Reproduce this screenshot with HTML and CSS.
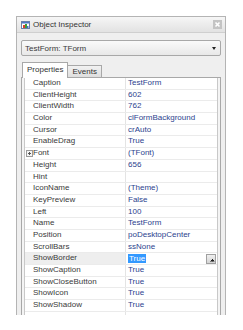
FILE: index.html
```html
<!DOCTYPE html>
<html lang="en">
<head>
<meta charset="UTF-8">
<title>Object Inspector</title>
<link rel="stylesheet" href="styles.css">
</head>
<body>

    <div class="window">
        <div class="titlebar">
            <svg class="title-icon" width="9" height="8" viewBox="0 0 9 8">
                <rect x="0.5" y="0.5" width="8" height="7" fill="#fff" stroke="#6b7fa8"/>
                <rect x="1" y="1" width="7" height="1.5" fill="#4d78c8"/>
                <rect x="2" y="4" width="2" height="3" fill="#d9412e"/>
                <rect x="4" y="3" width="2" height="4" fill="#3f9c3a"/>
                <rect x="6" y="5" width="1.5" height="2" fill="#3b6fd1"/>
            </svg>
            <span class="title-text">Object Inspector</span>
            <span class="close-btn">
                <svg width="9" height="9" viewBox="0 0 9 9">
                    <rect width="9" height="9" fill="#c4c4c4"/>
                    <path d="M2.5 2.5 L6.5 6.5 M6.5 2.5 L2.5 6.5" stroke="#fff" stroke-width="1.6"/>
                </svg>
            </span>
        </div>

        <div class="combo">
            <span>TestForm: TForm</span>
            <span class="arrow"></span>
        </div>

        <div class="tabs">
            <div class="tab active">Properties</div>
            <div class="tab">Events</div>
        </div>

        <div class="sheet">
            <div class="grid">
                <div class="row"><div class="name">Caption</div><div class="value">TestForm</div></div>
                <div class="row"><div class="name">ClientHeight</div><div class="value">602</div></div>
                <div class="row"><div class="name">ClientWidth</div><div class="value">762</div></div>
                <div class="row"><div class="name">Color</div><div class="value">clFormBackground</div></div>
                <div class="row"><div class="name">Cursor</div><div class="value">crAuto</div></div>
                <div class="row"><div class="name">EnableDrag</div><div class="value">True</div></div>
                <div class="row"><div class="name"><span class="expand"></span>Font</div><div class="value">(TFont)</div></div>
                <div class="row"><div class="name">Height</div><div class="value">656</div></div>
                <div class="row"><div class="name">Hint</div><div class="value"></div></div>
                <div class="row"><div class="name">IconName</div><div class="value">(Theme)</div></div>
                <div class="row"><div class="name">KeyPreview</div><div class="value">False</div></div>
                <div class="row"><div class="name">Left</div><div class="value">100</div></div>
                <div class="row"><div class="name">Name</div><div class="value">TestForm</div></div>
                <div class="row"><div class="name">Position</div><div class="value">poDesktopCenter</div></div>
                <div class="row"><div class="name">ScrollBars</div><div class="value">ssNone</div></div>
                <div class="row selected">
                    <div class="name">ShowBorder</div>
                    <div class="value editor"><span class="sel-text">True</span><span class="drop-btn"></span></div>
                </div>
                <div class="row"><div class="name">ShowCaption</div><div class="value">True</div></div>
                <div class="row"><div class="name">ShowCloseButton</div><div class="value">True</div></div>
                <div class="row"><div class="name">ShowIcon</div><div class="value">True</div></div>
                <div class="row"><div class="name">ShowShadow</div><div class="value">True</div></div>
                <div class="row"><div class="name"></div><div class="value"></div></div>
            </div>
        </div>
    </div>

</body>
</html>
```

FILE: styles.css
```css
body {
    margin: 0;
    padding: 16px 0 0 16px;
    background-color: #ffffff;
    font-family: "Liberation Sans", Arial, sans-serif;
    font-size: 8px;
    color: #3a3a3a;
}

.window {
    width: 210px;
    height: 299px;
    box-sizing: border-box;
    border: 1px solid #b4b4b4;
    border-bottom: none;
    background-color: #efefef;
    display: flex;
    flex-direction: column;
    overflow: hidden;
}

.titlebar {
    height: 16px;
    flex-shrink: 0;
    display: flex;
    align-items: center;
    padding: 0 3px 0 4px;
    background: linear-gradient(#f6f6f6, #e2e2e2);
    border-bottom: 1px solid #cfcfcf;
    box-sizing: border-box;
}

.title-icon {
    margin-right: 3px;
}

.title-text {
    flex: 1;
    color: #333;
}

.close-btn {
    display: flex;
}

.combo {
    margin: 7px 4px 0 4px;
    height: 16px;
    flex-shrink: 0;
    box-sizing: border-box;
    border: 1px solid #a8a8a8;
    border-radius: 2px;
    background: linear-gradient(#fafafa, #e8e8e8);
    display: flex;
    align-items: center;
    padding: 0 4px 0 3px;
}

.combo span:first-child {
    flex: 1;
}

.arrow {
    width: 0;
    height: 0;
    border-left: 2.5px solid transparent;
    border-right: 2.5px solid transparent;
    border-top: 3px solid #222;
}

.tabs {
    display: flex;
    align-items: flex-end;
    margin: 6px 0 0 6px;
    height: 15px;
    flex-shrink: 0;
}

.tab {
    height: 12px;
    box-sizing: border-box;
    padding: 1px 4px 0 4px;
    border: 1px solid #a8a8a8;
    border-bottom: none;
    background: linear-gradient(#f2f2f2, #dedede);
    color: #333;
    margin-left: -1px;
}

.tab.active {
    padding-top: 2px;
    background: #ffffff;
    position: relative;
    z-index: 1;
    margin-bottom: -1px;
    height: 16px;
}

.sheet {
    margin: 0 4px;
    flex: 1;
    border: 1px solid #a8a8a8;
    border-bottom: none;
    background-color: #f4f4f4;
    padding: 0 2px 0 2px;
    overflow: hidden;
}

.grid {
    background-color: #ffffff;
    border-left: 1px solid #c8c8c8;
    border-right: 1px solid #c8c8c8;
    height: 100%;
}

.row {
    display: grid;
    grid-template-columns: 101px 1fr;
    height: 11.7px;
    box-sizing: border-box;
    border-bottom: 1px solid #ebebeb;
    line-height: 10.7px;
}

.name {
    padding-left: 8px;
    border-right: 1px solid #e4e4e4;
    display: flex;
    align-items: center;
    position: relative;
    white-space: nowrap;
}

.value {
    padding-left: 2px;
    color: #2c3f8e;
    display: flex;
    align-items: center;
    white-space: nowrap;
}

.expand {
    position: absolute;
    left: 1px;
    top: 2px;
    width: 5px;
    height: 5px;
    border: 1px solid #9a9a9a;
    background:
        linear-gradient(#555, #555) center / 3px 1px no-repeat,
        linear-gradient(#555, #555) center / 1px 3px no-repeat,
        #f4f4f4;
}

.selected .name {
    background-color: #eeeeee;
}

.editor {
    justify-content: space-between;
    padding-right: 1px;
}

.sel-text {
    background-color: #3399ff;
    color: #ffffff;
    padding: 0 1px;
    line-height: 9px;
}

.drop-btn {
    width: 10px;
    height: 10px;
    box-sizing: border-box;
    border: 1px solid #a0a0a0;
    background:
        linear-gradient(135deg, transparent 50%, #222 50%) 2.5px 4px / 2.5px 2.5px no-repeat,
        linear-gradient(225deg, transparent 50%, #222 50%) 4.5px 4px / 2.5px 2.5px no-repeat,
        linear-gradient(#f0f0f0, #d4d4d4);
}
```
